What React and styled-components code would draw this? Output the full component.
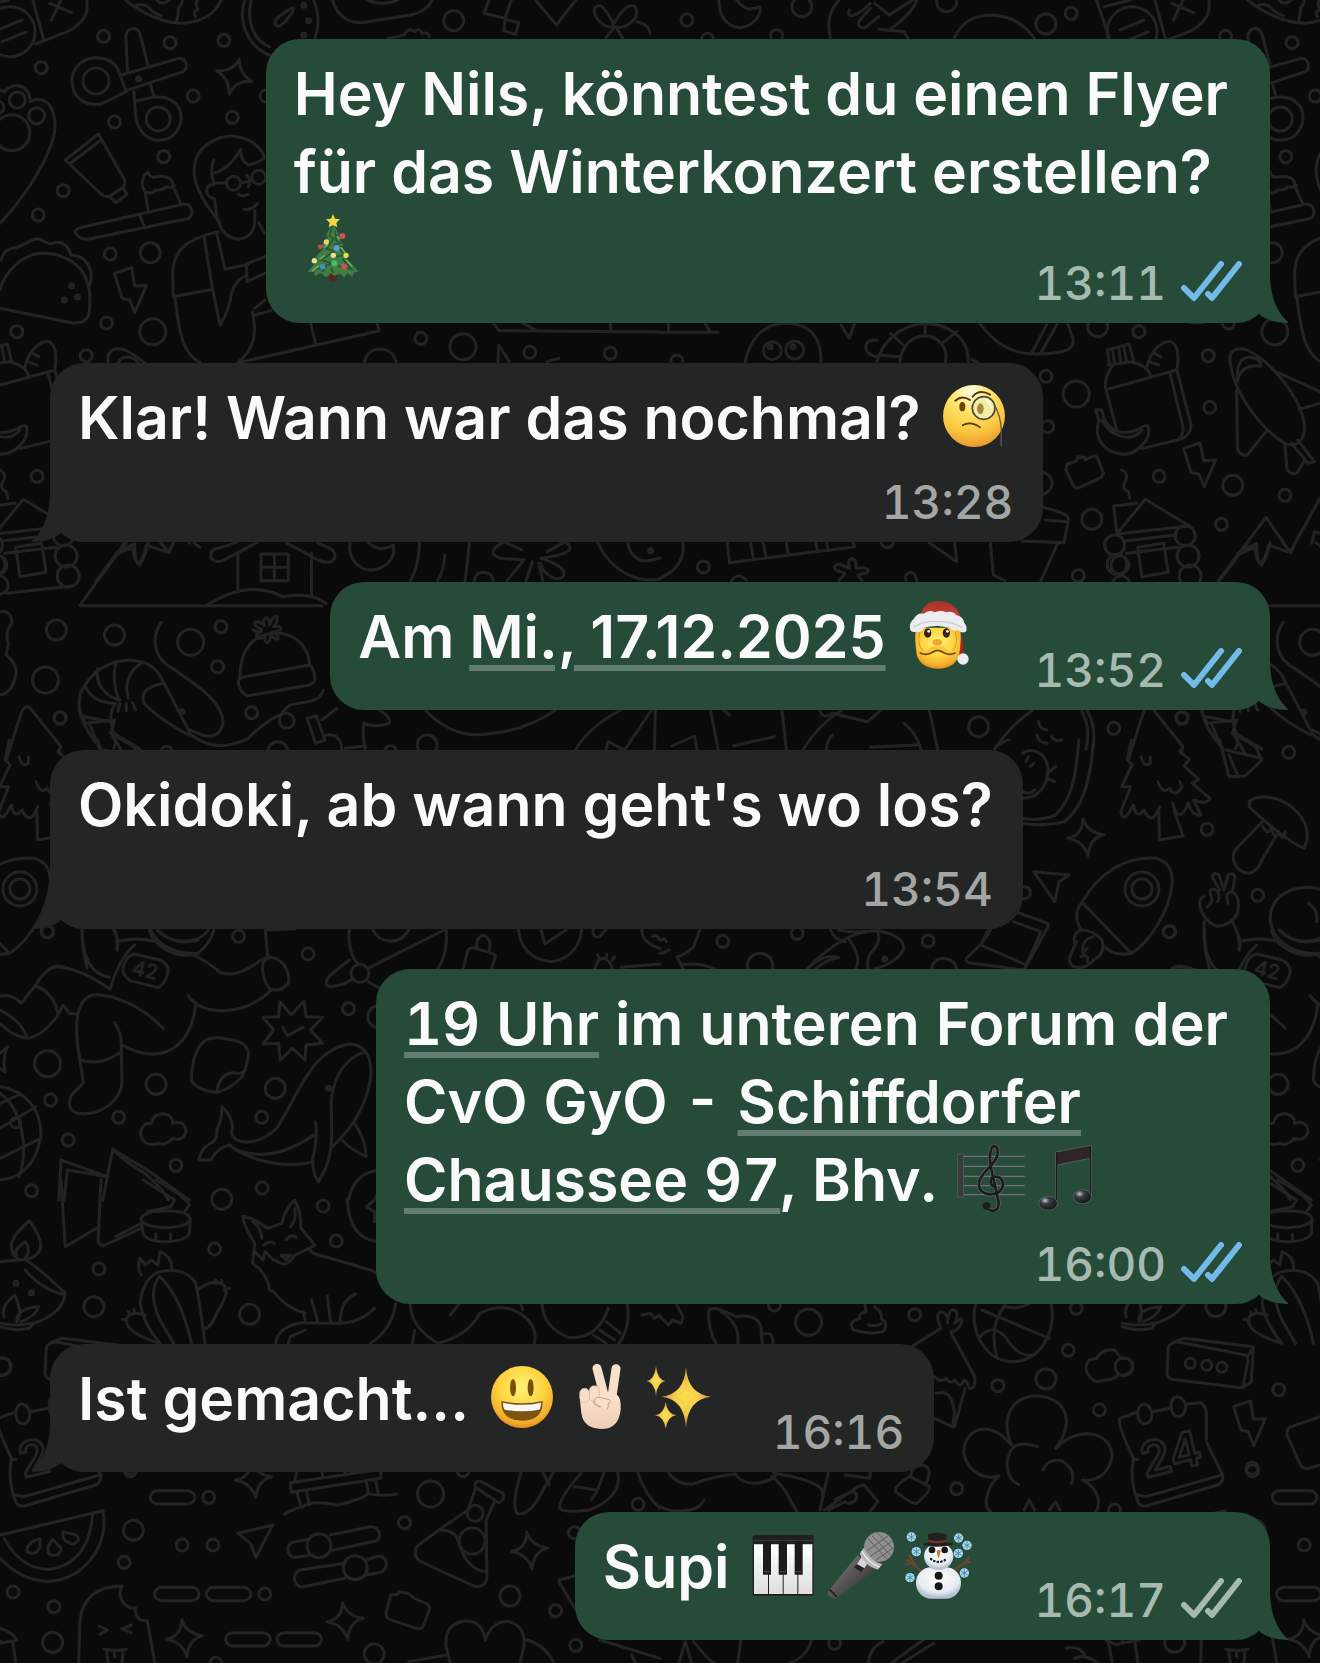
import React from 'react';
import styled, { createGlobalStyle, css } from 'styled-components';

const GlobalStyle = createGlobalStyle`
  * {
    box-sizing: border-box;
  }

  body {
    margin: 0;
    background: #0a0a0a;
    font-family: Inter, "Liberation Sans", sans-serif;
    -webkit-font-smoothing: antialiased;
  }
`;

const Screen = styled.main`
  position: relative;
  min-height: 100vh;
  padding: 39px 50px 23px;
  overflow: hidden;
`;

// sits behind the messages
const WallpaperSvg = styled.svg`
  position: absolute;
  top: 0;
  left: 0;
  width: 100%;
  height: 100%;
  fill: none;
  stroke: #232323;
  stroke-width: 3;
  stroke-linecap: round;
  stroke-linejoin: round;

  path, ellipse, rect {
    vector-effect: non-scaling-stroke;
  }
`;

const MessageList = styled.ol`
  position: relative;
  display: flex;
  flex-direction: column;
  gap: 40px;
  margin: 0;
  padding: 0;
  list-style: none;
`;

const layouts = {
  // time on its own row under the text
  below: css`
    flex-direction: column;
    gap: 20px;
  `,
  // time to the right of a single line
  beside: css`
    justify-content: space-between;
    gap: 56px;
  `,
  // time shares the last line, which has room to spare
  tucked: css`
    display: grid;
  `,
};

const Bubble = styled.li`
  position: relative;
  display: flex;
  align-self: ${(p) => (p.$mine ? 'flex-end' : 'flex-start')};
  max-width: 100%;
  padding: 15px ${(p) => (p.$mine ? 28 : 30)}px 15px 28px;
  border-radius: 34px;
  background: ${(p) => (p.$mine ? '#274b39' : '#242625')};
  color: ${(p) => (p.$mine ? '#a6bab0' : '#a4a5a5')};
  ${(p) => layouts[p.$layout]}
`;

const TailSvg = styled.svg`
  position: absolute;
  bottom: 0;
  ${(p) => (p.$mine ? 'right: -18px;' : 'left: -18px; transform: scaleX(-1);')}
  width: 40px;
  height: 50px;
  fill: ${(p) => (p.$mine ? '#274b39' : '#242625')};
`;

const Text = styled.p`
  grid-area: 1 / 1;
  margin: 0;
  padding-top: 1px;
  padding-bottom: ${(p) => (p.$layout === 'below' ? 0 : 19)}px;
  padding-right: ${(p) => (p.$wide ? 14 : 0)}px;
  color: #fafafa;
  font-size: 59px;
  font-weight: 600;
  line-height: 78px;
  font-variant-numeric: ${(p) => (p.$tabular ? 'tabular-nums' : 'normal')};
`;

const TextLink = styled.a`
  color: inherit;
  text-decoration: underline;
  text-decoration-color: rgba(255, 255, 255, 0.28);
  text-decoration-thickness: 6px;
  text-underline-offset: 7px;
`;

const Meta = styled.div`
  grid-area: 1 / 1;
  align-self: flex-end;
  justify-self: end;
  display: flex;
  align-items: center;
  gap: 14px;
`;

const Time = styled.time`
  font-size: 46px;
  font-weight: 500;
  line-height: 50px;
  font-variant-numeric: tabular-nums;
`;

const TicksSvg = styled.svg`
  width: 62px;
  height: 44px;
  fill: none;
  stroke: ${(p) => (p.$read ? '#72bbe8' : 'currentColor')};
  stroke-width: 6;
  stroke-linecap: round;
  stroke-linejoin: round;
`;

const EmojiSvg = styled.svg`
  width: 68px;
  height: 68px;
  margin: 0 5px;
  vertical-align: -11px;
`;

/* ---------- wallpaper ---------- */

const TILE = 1122;
const SX = 2.376;
const SY = 3;

// Each sheet covers one part of the tile; units are 1/SX by 1/SY of a pixel.
// rings: [cx, cy, r in px], dots: [cx, cy], pills: [x, y], sparkles: [cx, cy]
const sheets = [
  {
    x: 0, y: 0,
    paths: [
      'M-5 90L52 60M5 125L62 96M78 0L104 120M84 132L160 95Q215 60 206 0M145 0L122 60M118 10L170 38',
      'M298 0Q370 70 438 70Q505 60 526 0M325 15q20-5 30 10q10 15 28 22M372 0q10 15 25 5l8-8M420 60q5-20 3-35q12-15 10-30M465 50q-8-15 5-22q-8-20 0-28',
      'M582 0C565 60 585 140 645 168M597 0C585 60 600 120 640 140M745 0Q765 60 748 116M692 25C670 40 650 60 654 72C660 88 675 75 697 32Q700 20 692 25',
      'M300 275L240 312C200 320 170 290 171 240C172 200 200 172 230 173C265 175 280 200 285 225ZM288 225L425 175C445 175 448 205 435 215L300 272',
      'M303 215L299 105C305 80 325 80 332 100L352 198M358 255L366 290M318 275L322 340C325 400 355 422 378 421C415 420 432 380 430 345C428 310 400 285 365 292L325 302',
      'M568 177Q568 220 598 244Q560 240 545 282Q545 235 515 212Q555 215 568 177Z',
      'M0 670C60 590 140 440 130 360C125 300 95 290 72 305C70 250 30 245 10 275L0 270',
      'M234 402L155 480L240 582Q248 592 262 588L292 562Q300 550 295 538ZM165 492L240 420M290 562L302 582L276 608L258 588',
      'M195 682L435 613C455 610 462 635 450 655L212 717C190 722 175 700 180 690Q185 684 195 682M332 645L342 678',
      'M352 632L345 575C335 560 335 530 352 516Q355 535 372 530C400 525 412 540 410 556L430 612M345 575Q360 585 370 570Q385 572 395 560Q410 565 415 556',
      'M522 668C480 600 450 540 465 480C480 420 540 400 570 412C600 420 620 445 628 470M503 520Q540 515 572 448Q570 480 590 495Q610 490 628 475',
      'M508 555C485 550 485 590 510 597L515 650C525 700 545 715 565 718C595 715 610 690 605 632M508 480Q498 510 508 550L536 548M566 582Q575 592 588 584M580 628Q600 630 612 610M572 548L590 545M585 525Q600 540 590 560',
      'M518 695C440 720 412 750 410 820L412 890L505 868L485 712M515 700L535 808L590 793M415 890C425 980 430 1060 475 1087M505 868L523 975Q545 930 550 880Q560 840 580 830M630 770L585 792L587 845L630 820M600 935Q608 980 602 1020Q590 1065 565 1087M605 925L630 900M605 945L645 932M615 668L628 700',
      'M570 1087L902 992L895 968M738 970L750 1030',
      'M0 925L170 968C215 975 215 940 213 880C205 790 150 758 95 760C50 765 10 820 0 870M2 780Q10 745 40 742Q55 735 75 722Q90 710 105 725Q120 735 130 728Q160 722 168 765C205 765 225 810 213 855',
      'M272 820L313 803L320 858L348 856L320 938L308 900L290 895Z',
      'M1172 968L1185 992L1568 996M1240 968L1275 992M1450 970L1452 990M1183 1087L1185 1035L1210 1085M1300 1085L1328 1075M866 1087C870 1060 885 1047 903 1047C925 1048 938 1065 941 1087',
      'M790 0C800 50 830 70 860 68L975 45Q1015 35 1027 0M872 0Q905 20 945 0M922 116L960 105Q970 80 985 95Q995 80 1003 100Q1018 95 1020 110',
      'M1162 0L1150 40L1200 55L1215 0M1200 60L1197 92L1225 103L1233 68L1200 58M1272 0L1322 75L1368 0',
      'M1460 80C1440 20 1420 0 1412 30C1412 60 1440 85 1455 80C1480 20 1505 0 1513 30C1515 65 1480 90 1460 80M1458 85L1440 112M1465 85L1480 115M1513 65Q1540 70 1545 100',
    ],
    rings: [
      [24, 95, 25], [228, 243, 13], [376, 357, 12], [41, 300, 8], [87, 347, 8], [28, 398, 18], [-5, 322, 6], [555, 550, 7], [615, 532, 7],
      [246, 109, 6], [404, 128, 6], [532, 121, 6], [98, 203, 6], [459, 288, 6], [632, 288, 6], [552, 352, 6], [272, 366, 6], [389, 470, 6],
      [150, 572, 6], [91, 645, 6], [262, 762, 6], [253, 969, 6], [40, 995, 6], [205, 1067, 6], [1000, 1015, 6], [1259, 1057, 6],
      [1450, 1060, 6], [357, 758, 10], [1078, 62, 10], [363, 995, 13], [1100, 1040, 13],
    ],
    dots: [[722, 16], [733, 62], [722, 105], [329, 237], [170, 858], [153, 900], [184, 891]],
  },
  {
    x: 660, y: 0,
    paths: [
      'M140 0C140 50 160 82 190 83C220 80 240 50 238 20Q205 40 182 0',
      'M405 116C395 60 405 30 425 0M450 30C440 60 470 50 500 10M520 50L485 85Q465 80 475 60L500 25M510 10L545 45L600 0M520 88L580 95L590 116M610 0Q600 40 545 90',
      'M700 112C720 60 750 45 790 46C840 48 870 80 890 116M1037 0L1068 115M1055 20L1118 0',
      'M20 970L20 992M108 970L118 996M0 997L138 997M430 975L450 1015L462 970M202 1087C215 1010 250 970 300 970C360 970 385 1020 382 1087',
      'M515 1020C480 1015 480 1065 515 1070M515 1087C530 1020 570 980 625 970C690 970 735 1020 732 1087M570 1087C575 1020 610 1005 640 1008C670 1020 685 1050 678 1087M548 1000L578 1035M630 970L630 1008M670 1030L705 995M520 1065L568 1070M740 1078L755 1087',
      'M760 970C800 1040 850 1065 900 1062C960 1060 990 1050 980 1010L968 970M885 1055L920 970M905 1058L945 970',
    ],
    rings: [[64, 60, 6], [277, 107, 6], [977, 40, 6], [113, 118, 6], [337, 20, 10], [681, 5, 10], [917, 72, 10], [40, 1083, 6], [267, 1052, 9], [320, 1050, 9], [1040, 980, 10]],
    dots: [[262, 1040], [316, 1040]],
  },
  {
    x: 0, y: 340,
    paths: [
      'M15 760L170 738M190 797L230 725M190 797L765 797',
      'M505 660C495 640 505 625 520 625L560 608M505 660Q520 670 535 658L610 608M565 640L565 745M740 640L740 765M680 608L755 660Q785 675 795 655Q800 630 775 620L755 608M620 642H685V722H620ZM652 642V722M620 682H685M490 797Q560 740 620 750Q650 755 670 770Q740 755 775 790',
      'M275 640L320 610Q320 670 332 675Q345 650 352 608M382 608L402 638L412 607M460 608L475 622M230 725L300 607',
      'M832 607C825 650 850 690 882 690C920 688 940 650 935 615Q900 640 875 607M997 607Q995 680 975 722M1115 607Q1110 680 1105 722M1057 645Q1055 690 1040 722M1127 722Q1130 697 1150 697Q1170 700 1172 722',
      'M1195 607Q1150 640 1190 655L1245 660L1205 722M1345 607Q1380 640 1285 655Q1350 680 1338 710Q1320 730 1290 690L1285 670M1265 665L1250 722M1280 670L1290 722M1200 607L1240 630M1340 607L1300 635',
      'M1420 607C1450 690 1510 730 1568 718M1492 607C1495 650 1520 665 1540 662L1568 655',
      'M0 815Q30 812 28 850Q10 880 20 910L15 945Q40 970 38 1000Q30 1060 0 1065',
      'M15 1260Q30 1200 50 1120Q62 1085 75 1110L145 1220L140 1240',
      'M240 1225C190 1160 175 1080 200 1040C230 970 290 955 325 963C360 968 380 1000 390 1030L452 1180M390 1030C345 1040 335 1060 342 1090Q380 1140 448 1185M205 1045C220 1080 250 1090 275 1090M232 985C225 1030 250 1070 285 1080M275 970Q265 1020 282 1080M335 970Q290 1010 305 1075M275 1090Q255 1120 270 1180L330 1225M192 1128L262 1145M268 1190Q280 1205 270 1225M285 1090L280 1115M300 1090L300 1112M315 1088L322 1110',
      'M383 847C355 900 370 960 410 985C460 1030 530 1080 530 1150Q520 1200 480 1185L452 1170M455 1185C500 1230 550 1220 590 1195Q640 1130 680 1118C710 1130 700 1165 680 1165C655 1160 660 1120 690 1095C720 1085 760 1090 768 1050',
      'M570 1010C570 930 600 880 660 878C710 885 735 930 735 975M575 1012L735 975Q748 985 748 1020Q745 1030 735 1035L590 1067Q575 1065 567 1035Q565 1015 575 1012',
      'M622 868Q602 858 606 846Q618 842 628 856Q622 838 634 832Q642 840 640 856Q648 828 658 828Q662 842 650 860Q664 856 668 866Q662 878 648 876Q664 888 660 898Q648 896 642 882Q644 904 634 908Q626 898 630 884Q620 900 610 894Q606 880 622 874Q606 876 602 870',
      'M1010 1110C1070 1190 1130 1190 1170 1180Q1250 1170 1320 1110M900 1110Q930 1130 925 1150Q890 1165 865 1150Q860 1180 868 1228M730 1135L752 1128L772 1200L750 1210ZM765 1140L800 1105M775 1185Q810 1180 812 1228M820 1225L868 1218M1368 1228Q1400 1160 1475 1110M1485 1228L1548 1110M1557 1110L1555 1228M1440 1228L1445 1205L1480 1228',
    ],
    rings: [[134, 870, 10], [272, 885, 10], [453, 907, 13], [108, 1020, 13], [525, 860, 6], [517, 980, 6], [598, 1118, 6], [143, 1133, 6], [1015, 1215, 10], [660, 1235, 10], [928, 1235, 6], [157, 648, 11], [162, 708, 11], [-2, 735, 9], [-5, 675, 9]],
    dots: [[432, 1115], [1546, 632]],
  },
  {
    x: 660, y: 340,
    paths: [
      'M1068 75L1063 30L1115 12L1125 62M1080 72L1075 25M1095 68L1090 22M1108 62L1102 18M1065 75L1122 65M1075 78C1060 100 1058 120 1058 140L1085 270M1122 66Q1155 75 1165 103M1062 148L1228 90L1262 255Q1260 290 1235 298L1145 326M1212 100L1243 262Q1245 285 1228 302M1157 82C1165 30 1195 0 1215 5C1235 20 1232 60 1228 90M1172 38L1190 50M1162 65L1185 75',
      'M1035 210L1050 210C1055 260 1090 300 1145 262Q1150 255 1160 258C1170 300 1130 345 1098 343C1050 335 1030 290 1043 240ZM1050 240C1070 290 1120 310 1145 270',
      'M968 372L990 363L992 350L1010 352L1010 360L1030 348Q1040 348 1042 362L1054 400L1048 412L992 445Q985 445 980 432L964 390Z',
      'M1244 325L1283 309L1292 362L1320 360L1293 440L1280 402L1262 398Z',
      'M1357 80C1345 30 1370 20 1395 30C1460 70 1540 200 1530 280C1525 310 1505 320 1485 310C1430 270 1365 160 1357 80M1372 125Q1380 70 1428 78Q1425 50 1395 52Q1368 60 1372 125M1370 150L1372 325Q1380 350 1395 345L1440 275M1455 90L1568 155M1518 208L1568 190M1485 315L1490 390Q1505 410 1515 395L1530 365M1500 310L1540 370L1555 365L1515 300',
      'M1097 390Q1115 400 1105 425Q1095 445 1113 455L1116 475M1078 498L1133 490M1078 498L1085 575M1085 582L1153 478L1258 558ZM1103 603L1225 585M1108 640L1230 622M1135 622L1197 610L1207 697L1145 710Z',
      'M1326 722L1440 532L1497 637L1568 475M1380 640L1412 622Q1418 668 1427 672Q1440 650 1446 615L1490 635M1548 610L1555 575L1568 580',
      'M905 500Q975 520 970 540L960 608L860 603M915 540L965 545M785 608L792 705L820 722M945 610L905 722',
      'M160 608L165 668L463 620L458 605M215 608L222 655M245 608L252 652M300 608L305 645M370 608L375 635M395 605L400 632M640 608L705 665L700 608',
      'M455 655Q445 660 450 685L425 672Q408 678 418 690L440 700L425 722M455 655Q470 660 465 685L485 683Q500 688 492 698L470 705L480 722M585 722Q580 700 595 697Q608 700 610 722M170 722Q185 695 205 720M0 715Q60 680 55 610',
      'M120 1110L138 1228M290 1110L300 1228M380 1110Q385 1140 410 1120L493 1145L525 1110M340 1228Q380 1150 430 1112M395 1228Q400 1190 410 1185M580 1150Q610 1180 620 1228M640 1110L660 1228M175 1217L272 1190M28 1218L82 1188L88 1228M150 1110L165 1125M500 1222L610 1215',
      'M795 1228Q830 1160 885 1110M1000 1110Q1025 1160 1012 1228M1014 1110Q1038 1160 1028 1228M900 1145Q900 1165 918 1170M895 1185Q900 1210 920 1210M930 1190Q935 1205 955 1200',
      'M1285 1110L1300 1150L1370 1140M1310 1150L1335 1228M1370 1140L1360 1180L1430 1228M1365 1185L1390 1240',
    ],
    rings: [[917, 109, 6], [921, 260, 6], [1306, 202, 6], [1186, 409, 6], [1485, 466, 6], [1334, 553, 6], [994, 707, 6], [103, 681, 6], [540, 605, 6], [989, 162, 13], [1361, 436, 10], [1026, 538, 10], [905, 430, 11], [1080, 615, 10], [1248, 587, 10], [1086, 673, 10], [757, 1160, 10], [1078, 1165, 6], [1240, 1135, 6], [1494, 1237, 6]],
    dots: [],
  },
  {
    x: 0, y: 740,
    paths: [
      'M195 567C195 640 210 700 260 712M270 567Q285 600 278 630M278 605Q320 590 365 603M320 642L380 660Q405 675 398 705Q390 735 375 743L310 722Q290 705 292 685Q300 645 320 642',
      'M355 570C365 620 420 660 470 640Q500 610 508 570M375 570Q400 605 440 604Q480 600 495 570',
      'M50 790L85 735Q110 680 140 680Q200 690 262 748Q280 660 320 615M0 768Q30 760 50 790M85 738Q130 760 138 825M0 810Q50 840 65 895Q100 890 138 825L150 795L165 820L182 822M0 850Q30 890 65 895',
      'M388 865C330 790 260 760 220 765C180 780 178 850 185 920L198 1028L170 1065Q155 1110 185 1120C240 1130 290 1080 290 1020L288 925Q290 880 272 847M192 960Q240 980 288 935M290 915C340 950 400 960 440 890Q460 850 465 795M447 767C480 830 580 830 645 750M460 645Q500 670 520 695Q560 720 620 660L640 650M625 668Q640 640 665 662Q690 690 685 730Q665 760 640 745Q620 710 625 668M630 570L636 650M630 570L700 567',
      'M830 567C825 620 840 660 850 670M885 567C900 610 950 620 972 567M1060 567Q1065 640 1040 686M875 685L1055 570M830 660L785 705Q765 735 785 740Q820 735 840 715M875 725Q895 740 905 745',
      'M1100 686L1112 630Q1118 620 1130 625L1170 640Q1180 645 1176 655L1168 686M1133 622Q1130 590 1150 586Q1168 595 1163 630M1232 567C1235 620 1260 660 1310 665C1360 655 1380 610 1382 567M1285 567L1295 612L1345 570M1410 567Q1405 595 1425 590L1440 567',
      'M1413 686Q1420 655 1435 655Q1450 660 1455 686M1425 655L1420 645M1440 655L1442 643M1455 660L1460 650M1475 682L1568 672M1525 567Q1525 610 1568 625M1550 590Q1560 580 1568 600',
      'M665 785L692 825L722 783L727 830L766 832L738 870L766 910L727 915L725 960L695 925L666 960L662 910L625 912L650 870L625 832L662 830ZM672 862L683 887L720 862',
      'M480 910Q500 885 540 898Q595 905 590 950Q585 985 575 1010Q550 1045 515 1058Q450 1045 455 1010Q458 940 480 910M515 1058Q520 1000 555 998Q575 1005 583 990',
      'M550 1180C560 1220 620 1215 660 1160C710 1060 740 930 830 912C880 915 890 980 875 1050C860 1110 840 1160 790 1220M545 1215C600 1270 690 1285 745 1265M750 1145Q755 1200 742 1260Q745 1310 757 1325Q790 1260 788 1180L787 1080Q800 960 870 935M550 1180Q560 1140 527 1100Q528 1140 515 1170Q518 1200 500 1210Q480 1220 472 1260L500 1260Q520 1220 545 1215M840 1145Q870 1200 870 1250Q835 1230 812 1200M560 1230Q650 1270 745 1185',
      'M375 1210Q350 1220 340 1200Q325 1180 345 1152L360 1150Q365 1118 392 1122Q412 1130 410 1150Q440 1140 442 1175Q435 1205 410 1195Q390 1220 375 1210',
      'M0 1040C60 1050 100 1110 97 1190Q80 1310 0 1320M0 1060Q45 1100 55 1200Q60 1260 45 1310M0 1165L85 1100M0 1255L97 1195M0 1090L45 1065M0 940L18 920Q5 950 12 995L0 985',
      'M140 1380L145 1260L255 1310L268 1228L330 1275L350 1290L450 1380M152 1380L160 1290L255 1310L245 1380M268 1228Q300 1270 345 1300L385 1350L400 1380M828 1380Q840 1300 900 1290',
    ],
    rings: [[112, 575, 6], [567, 589, 6], [732, 642, 6], [828, 806, 6], [120, 1080, 6], [282, 1132, 6], [622, 1132, 6], [162, 1200, 6], [418, 1276, 6], [75, 1352, 6], [623, 1344, 6], [113, 971, 13], [371, 1033, 10], [654, 1045, 10], [855, 700, 9], [900, 830, 11], [37, 1148, 5]],
    dots: [[781, 1045]],
  },
  {
    x: 660, y: 740,
    paths: [
      'M1120 0L1110 60Q1125 75 1120 78L1097 140L1118 140L1095 215Q1100 250 1118 210L1125 195Q1130 240 1150 210Q1165 250 1180 220L1188 200M1230 0L1242 20L1235 35L1258 58L1245 78L1280 118L1265 130L1307 175Q1300 195 1268 180L1285 225Q1265 230 1255 190Q1240 240 1225 215L1218 190M1185 215L1187 300L1243 288L1222 215M1143 50Q1150 85 1165 70L1165 50M1183 125Q1195 165 1210 145Q1225 175 1240 140L1235 125',
      'M1330 0L1352 110L1390 108L1430 60L1415 20L1390 0M1352 45L1372 105M1345 30L1430 55',
      'M1400 185C1420 160 1470 170 1500 200C1540 240 1545 290 1530 325C1500 310 1440 250 1400 200ZM1435 240L1370 325C1350 350 1370 400 1400 400Q1420 395 1430 360L1465 285M1432 260Q1445 290 1452 262Q1460 305 1470 275Q1480 310 1485 275',
      'M1330 450L1312 410Q1318 392 1328 405L1340 450L1350 405Q1362 395 1366 410L1360 455Q1380 470 1372 520Q1355 560 1320 558Q1290 540 1283 500Q1280 475 1292 470M1300 500Q1315 490 1310 470Q1300 445 1318 448Q1335 460 1325 485M1350 490Q1340 455 1360 455M1293 545Q1290 620 1305 685M1360 545Q1380 590 1376 630',
      'M1568 447C1500 430 1448 470 1450 540C1455 600 1500 645 1568 640M1540 490Q1565 510 1560 545M1470 570Q1510 620 1568 600',
      'M862 40C885 20 920 40 922 90C920 150 890 175 862 175M870 65L875 50M880 80l8-10M862 155Q880 165 890 150M920 100L940 80M918 115L938 125M800 20Q820 0 830 0M995 0C990 80 985 170 940 225Q900 245 862 235M1030 0C1025 100 1010 200 960 245Q920 260 858 250',
      'M888 395L972 405L948 425L938 485Z',
      'M1003 487C1040 400 1110 345 1180 355Q1220 370 1217 430C1210 520 1160 610 1120 640ZM1003 487C985 510 988 540 1000 570M1055 620Q1080 650 1120 640M1000 570Q980 580 985 610L990 605Q975 640 972 660Q980 685 985 680Q1010 690 1030 660Q1060 640 1050 600Q1030 570 1000 570M1030 590Q1000 600 1005 640L1015 625M1000 650Q1020 640 1015 665',
      'M208 686C205 650 225 640 240 640Q270 645 268 686M645 686Q650 655 675 655Q700 660 705 686M1215 686Q1235 670 1260 685',
      'M785 570Q775 600 728 655Q725 668 740 670L865 690L922 560Q925 550 910 545L845 515M780 570L762 615L870 675L905 575L840 545',
      'M350 686C400 620 460 570 520 572Q585 590 578 630Q560 670 510 686M405 570Q415 600 440 605M450 600Q480 650 465 686M515 573Q530 600 500 640Q490 660 495 686M355 680Q390 640 425 652Q395 660 370 686M425 570Q460 580 490 573',
      'M0 640Q10 640 22 630M5 600Q10 590 15 605M95 568L80 620Q60 645 40 650L55 686M50 675Q90 665 130 686',
    ],
    rings: [[1145, 447, 17], [1145, 447, 10], [1300, 268, 6], [1420, 466, 6], [1211, 575, 6], [866, 458, 6], [637, 603, 6], [326, 580, 6], [149, 604, 6]],
    dots: [[534, 657]],
    sparkles: [[1011, 292]],
  },
  {
    x: 0, y: 1180,
    paths: [
      'M145 0L155 200L235 140M240 0L233 185Q240 200 250 195L335 145M275 170L335 130M340 0L415 60L405 80L350 95M370 0Q440 50 450 75L440 92M335 115L340 160Q350 185 390 185Q440 185 450 160L452 115M370 162V180M405 162V180M335 118Q340 92 393 92Q448 92 452 118Q445 142 393 143Q342 142 335 118',
      'M825 60Q830 180 902 185M900 35L890 60L870 80L890 95L890 125',
      'M0 245Q40 240 50 240M60 240Q90 260 155 340Q150 400 80 430L70 445Q30 455 0 440M60 270Q100 330 155 345M30 215Q15 180 70 123Q110 190 90 220Q75 240 50 240Q30 230 30 215M40 225Q30 210 60 185Q75 215 60 232M0 430Q40 440 75 430M10 410Q0 380 35 345Q55 400 40 425M40 420Q40 385 92 380Q85 410 50 425',
      'M380 490Q340 430 333 370Q340 290 380 275Q440 260 465 310Q475 370 487 490M378 290Q350 340 380 420L412 490M380 290Q430 350 455 490M470 330Q510 290 535 320Q545 340 515 400Q500 445 487 445M380 490Q300 460 300 420Q305 390 345 405M335 285Q325 260 333 235L345 255L360 240L375 255L380 215Q410 230 408 270M513 300v10M527 300v10M545 325l-12 5M305 395l5 10M290 418l12 3M318 388l2 12',
      'M605 190C590 160 575 120 578 108Q605 115 635 145L670 130Q675 90 700 60Q715 90 715 145L748 195L735 205Q740 220 750 222L880 270L905 285M605 190L600 250L615 265Q640 300 640 330L650 335Q680 385 725 400M605 215L625 240L630 215L650 240M668 226H690L680 240ZM655 240Q680 270 700 225L735 205M628 195Q640 180 652 190M680 180Q690 160 703 172M600 125Q620 140 622 175M700 85Q705 120 690 140',
      'M740 358L755 425M778 348L785 425M845 342Q810 360 808 425M720 395L725 420M890 385Q850 435 790 430L715 428Q660 440 655 490M725 450L690 470L685 490M940 372Q930 450 880 490',
      'M975 372Q975 440 1040 490Q1110 470 1140 400Q1180 375 1215 388Q1280 420 1270 490M985 450L980 490M1070 405L1090 372M1238 372L1242 390M1288 372Q1290 440 1350 472Q1420 480 1445 385M1490 372Q1500 440 1470 490M1410 465L1440 490M1425 450L1460 480M1440 425L1475 460M1525 405L1545 400L1555 415L1568 405',
      'M690 908L905 868V895L692 937ZM705 877L700 905M765 877L767 890M820 877L818 885M705 935L715 980M728 932L735 975M870 903L875 940M892 900L898 937M675 1003Q700 985 720 980Q740 960 800 975Q860 960 875 940Q900 950 942 943',
      'M735 1078L700 1085Q680 1090 685 1115Q690 1135 705 1132L740 1125M785 1065L880 1040Q900 1040 902 1065Q900 1085 885 1085L785 1112M820 1150L712 1170Q698 1180 700 1200Q705 1222 720 1220L820 1195M868 1140L900 1128Q918 1130 918 1155Q915 1175 900 1178L870 1185',
      'M565 1060L648 1035L608 1132L595 1090Z',
      'M1130 922Q1125 905 1140 903L1195 940Q1200 960 1185 968ZM1130 925L1112 990Q1030 1060 990 1100Q980 1130 1000 1145L1125 1218Q1155 1225 1157 1190L1155 1020L1175 965M1045 1050Q1085 1050 1090 1090Q1110 1170 1155 1175',
      'M1238 877Q1215 970 1228 1000Q1260 1010 1290 930L1315 877M1290 877L1305 915M1380 880Q1325 960 1330 985Q1340 1000 1400 990Q1480 950 1468 877M1365 920L1420 930L1435 877M1420 930L1405 960M1515 877Q1535 950 1568 985',
      'M0 1065L245 992C260 1110 190 1205 110 1204Q50 1200 0 1135M10 1075Q50 1170 120 1168Q210 1150 220 1005M95 1075Q60 1090 65 1115Q85 1130 95 1100ZM125 1078Q105 1110 120 1125Q145 1130 145 1105ZM150 1055Q145 1085 175 1092Q195 1080 180 1065Z',
      'M187 1449L190 1320Q200 1220 290 1218Q275 1260 310 1285L322 1283Q320 1325 350 1322L368 1449M235 1338L255 1350L238 1362M312 1335L290 1347L312 1358M247 1408Q275 1415 300 1408M253 1412L257 1449M292 1412L290 1449M272 1415V1430M0 1345Q30 1355 40 1380L30 1385L38 1449M0 1390L28 1383',
      'M1153 1380Q1145 1320 1105 1323Q1055 1330 1060 1400L1070 1449M1153 1380Q1170 1320 1210 1325Q1250 1340 1245 1400L1235 1449M970 1445L1062 1425M1250 1380Q1290 1390 1315 1445',
      'M928 1245L945 1243L947 1235L970 1240L985 1255L1015 1272Q1022 1280 1020 1290L1005 1340Q1000 1347 990 1345L925 1318Q915 1310 918 1295Z',
      'M1328 1200L1365 1188M1328 1205L1368 1290M1425 1380L1568 1435M1500 1425L1510 1449',
    ],
    rings: [[768, 78, 6], [799, 183, 6], [510, 207, 6], [235, 267, 6], [295, 1147, 6], [31, 1236, 6], [128, 1280, 6], [433, 1095, 6], [506, 1095, 6], [496, 952, 6], [961, 1028, 6], [1320, 1292, 6], [1368, 1396, 6], [629, 1242, 6], [1516, 973, 6], [1365, 1058, 6], [310, 872, 6], [1100, 872, 6], [513, 1450, 6], [527, 58, 10], [593, 403, 10], [223, 380, 10], [317, 1051, 10], [125, 1387, 10], [1212, 1248, 10], [889, 1422, 10], [5, 560, 9], [1023, 942, 13], [758, 1097, 12], [844, 1163, 12], [1129, 1000, 8], [1122, 1083, 13]],
    dots: [[38, 310], [75, 338]],
    pills: [[357, 932], [367, 1222], [490, 1222], [536, 1358], [658, 1358]],
    sparkles: [[602, 898], [1258, 1112], [438, 1375], [820, 1323]],
  },
  {
    x: 660, y: 1180,
    paths: [
      'M1208 500Q1215 485 1235 487L1390 525Q1398 530 1397 545L1385 620Q1380 625 1370 622L1215 598Q1202 590 1205 570ZM1220 487L1245 475L1410 500L1397 528M1410 500L1405 605L1385 622',
      'M1135 696L1092 715Q1088 740 1125 835Q1115 900 1135 965Q1140 980 1155 978L1325 915Q1340 905 1337 885L1300 790M1170 695L1212 685M1250 672L1285 668Q1298 680 1298 700V780M1125 840L1135 838M1135 945L1155 950L1335 885',
      'M1135 702Q1135 675 1150 672Q1168 678 1169 702Q1168 730 1152 732Q1136 728 1135 702M1214 680Q1214 652 1229 650Q1248 655 1249 680Q1248 708 1231 710Q1215 706 1214 680',
      'M835 795C810 720 830 650 895 647C970 655 985 730 940 805C1000 730 1075 760 1074 830C1065 890 1030 905 1003 900C1050 930 1045 980 1035 995M835 795C780 710 720 750 722 820C730 880 775 900 805 888C770 930 770 980 785 995M865 990L877 960L890 990M925 990L940 965L950 990M897 800Q830 770 825 850Q825 900 852 913M910 870Q920 835 955 842Q990 870 978 910',
      'M600 498L668 445Q650 400 670 395Q685 400 683 430Q685 385 700 390Q712 400 700 430Q720 405 717 425Q710 455 690 455L748 590Q750 630 735 625Q728 600 722 600Q715 630 700 600Q690 615 680 595Q665 610 652 590M655 640Q670 635 680 640Q695 650 700 700L695 740L652 715M725 625L700 740',
      'M750 372C735 450 770 545 840 545C910 540 940 450 930 372M765 390L925 475M820 375Q780 440 800 530M820 380Q850 390 875 372M760 470Q790 430 820 470Q850 530 880 525',
      'M1060 600Q1035 608 1030 600Q1000 570 1020 540L1038 535Q1050 505 1080 510Q1095 530 1092 535Q1125 530 1122 565Q1115 590 1090 585Q1075 600 1060 600',
      'M460 450Q445 425 475 415Q470 400 490 395L487 375M510 380Q530 400 525 415Q545 430 530 455Q500 465 460 450M495 435Q520 440 527 430',
      'M115 395Q120 370 180 410Q230 400 240 440L243 490M115 395Q115 450 133 490M145 395Q190 430 185 490M240 465Q270 450 268 490M0 410L20 435L30 420L50 430L55 410L40 375',
      'M1363 680L1403 663L1410 718L1438 716L1411 797L1397 755L1380 750Z',
      'M1568 710L1500 740Q1488 745 1490 765L1520 850Q1525 868 1540 865L1568 855',
      'M20 877Q40 915 80 912Q120 890 180 882Q190 910 230 910Q280 900 275 877M265 890Q290 910 310 960L325 995M270 880Q370 900 385 930L388 950M400 877L380 990M0 980Q30 1000 70 990Q95 985 105 960',
      'M560 925Q575 900 595 890L640 920Q645 930 610 970Q600 975 560 935ZM595 887Q600 855 625 855Q650 865 632 910M390 990L470 920L485 915L518 965L500 993M415 960Q440 940 460 935Q475 950 460 965Q445 975 440 965L400 990M440 885L498 895L500 877',
      'M45 1449L60 1385L75 1449M80 1385Q120 1449 130 1449M185 1449L192 1380M360 1380Q350 1430 310 1449M495 1449Q500 1400 530 1385M550 1449L625 1380M575 1449L650 1390M965 1405Q1000 1395 1010 1430M985 1435Q1010 1420 1040 1449M1060 1380L1085 1395L1100 1385M1065 1385L1075 1449',
    ],
    rings: [[1260, 550, 5], [1299, 556, 5], [1335, 562, 5], [605, 404, 6], [970, 511, 6], [803, 617, 6], [1044, 690, 6], [1407, 865, 6], [1470, 629, 6], [705, 926, 6], [989, 385, 6], [272, 375, 6], [415, 1390, 6], [1080, 990, 6], [917, 597, 10], [353, 427, 13]],
    dots: [],
  },
];

const SPARKLE = 'M-6-55Q4-15 43-8Q10 2 6 55Q-4 12-43 2Q-8-4-6-55Z';

function Sheet({ x, y, paths, rings, dots, pills = [], sparkles = [] }) {
  return (
    <g transform={`translate(${x} ${y}) scale(${1 / SX} ${1 / SY})`}>
      {paths.map((d) => <path key={d} d={d} />)}
      {rings.map(([cx, cy, r], i) => <ellipse key={i} cx={cx} cy={cy} rx={r * SX} ry={r * SY} />)}
      {dots.map(([cx, cy], i) => <ellipse key={i} cx={cx} cy={cy} rx={SX * 2} ry={SY * 2} fill="#232323" />)}
      {pills.map(([px, py], i) => <rect key={i} x={px} y={py} width="106" height="40" rx="18" ry="20" />)}
      {sparkles.map(([cx, cy], i) => <path key={i} d={SPARKLE} transform={`translate(${cx} ${cy})`} />)}
    </g>
  );
}

function Wallpaper() {
  return (
    <WallpaperSvg aria-hidden="true">
      <defs>
        <g id="doodles">
          {sheets.map((sheet) => <Sheet key={`${sheet.x}-${sheet.y}`} {...sheet} />)}
          <text x="145" y="977" fontSize="20" textAnchor="middle" strokeWidth="1" fill="#232323" transform="rotate(14 145 971)">42</text>
          <text x="1171" y="1471" fontSize="48" fontWeight="600" textAnchor="middle" transform="rotate(-14 1171 1455)">24</text>
        </g>
      </defs>
      {[-1, 0, 1, 2].map((n) => <use key={n} href="#doodles" x={n * TILE} />)}
    </WallpaperSvg>
  );
}

/* ---------- emoji ---------- */

const HiddenSvg = styled.svg`
  position: absolute;
  width: 0;
  height: 0;
`;

function Defs() {
  return (
    <HiddenSvg aria-hidden="true">
      <defs>
        <radialGradient id="face" cx="0.5" cy="0.35" r="0.66">
          <stop offset="0" stopColor="#fff27a" />
          <stop offset="0.55" stopColor="#fdd33f" />
          <stop offset="0.85" stopColor="#f5ae2c" />
          <stop offset="1" stopColor="#e08a1c" />
        </radialGradient>
        <radialGradient id="monoface" cx="0.45" cy="0.1" r="0.95">
          <stop offset="0" stopColor="#fffce0" />
          <stop offset="0.35" stopColor="#fde468" />
          <stop offset="0.7" stopColor="#fbc53f" />
          <stop offset="1" stopColor="#e8902a" />
        </radialGradient>
        <linearGradient id="skin" x1="0" y1="0" x2="0" y2="1">
          <stop offset="0" stopColor="#fae3cf" />
          <stop offset="1" stopColor="#efcdb4" />
        </linearGradient>
        <radialGradient id="gold">
          <stop offset="0" stopColor="#ffe45c" />
          <stop offset="0.5" stopColor="#f6cb48" />
          <stop offset="1" stopColor="#c88a45" />
        </radialGradient>
        <linearGradient id="metal" x1="0" y1="0" x2="1" y2="1">
          <stop offset="0" stopColor="#8b8b8b" />
          <stop offset="0.5" stopColor="#555353" />
          <stop offset="1" stopColor="#242222" />
        </linearGradient>
        <linearGradient id="ivory" x1="0" y1="0" x2="0" y2="1">
          <stop offset="0" stopColor="#ffffff" />
          <stop offset="1" stopColor="#dedede" />
        </linearGradient>
        <radialGradient id="snow" cx="0.5" cy="0.35" r="0.6">
          <stop offset="0" stopColor="#ffffff" />
          <stop offset="0.75" stopColor="#e6ecf2" />
          <stop offset="1" stopColor="#b3c2cf" />
        </radialGradient>
        <radialGradient id="notehead" cx="0.35" cy="0.3" r="0.7">
          <stop offset="0" stopColor="#c5c8cf" />
          <stop offset="0.35" stopColor="#3a3a42" />
          <stop offset="1" stopColor="#17151a" />
        </radialGradient>
        <linearGradient id="santahat" x1="0" y1="0" x2="0" y2="1">
          <stop offset="0" stopColor="#a8322a" />
          <stop offset="1" stopColor="#d0483c" />
        </linearGradient>
      </defs>
    </HiddenSvg>
  );
}

const Emoji = ({ label, children }) => (
  <EmojiSvg viewBox="0 0 204 204" role="img" aria-label={label}>{children}</EmojiSvg>
);

const TreeEmoji = () => (
  <Emoji label="Weihnachtsbaum">
    <path d="M88 170H116L114 200Q102 206 90 200Z" fill="#4a2c1c" />
    <path d="M101 26L120 62L110 62L134 94L122 96L150 128L138 130L178 172L164 176L160 190L146 176L136 190L122 178L108 186L96 178L80 190L66 176L48 186L46 174L26 174L58 134L48 132L74 102L64 100L88 68L80 66Z" fill="#3f7f46" />
    <path d="M100 34L92 66L104 74L82 104L106 112L66 138L100 148L46 168M108 50L112 80L124 88L104 92M120 104L138 122L112 128M130 134L158 166L118 156M96 162L104 176M80 156L70 174" fill="none" stroke="#285a35" strokeWidth="6" />
    <path d="M88 92L76 100M78 124L62 136M60 156L40 170M114 66L122 76M126 100L138 116M142 138L160 158" stroke="#6fae60" strokeWidth="5" />
    <path d="M102 0L108 14L123 16L112 26L115 40L102 33L89 40L92 26L81 16L96 14Z" fill="#f6d743" />
    <circle cx="130" cy="66" r="9" fill="#d44e51" />
    <circle cx="82" cy="84" r="8" fill="#ead66a" />
    <circle cx="64" cy="98" r="7" fill="#c9484c" />
    <circle cx="113" cy="103" r="9" fill="#5d9bd8" />
    <circle cx="103" cy="124" r="8" fill="#f3dd8a" />
    <circle cx="141" cy="124" r="8" fill="#f2dd4b" />
    <circle cx="46" cy="140" r="8" fill="#f1dd9a" />
    <circle cx="71" cy="158" r="8" fill="#4d8bd0" />
    <circle cx="106" cy="148" r="9" fill="#4fb870" />
    <circle cx="136" cy="158" r="9" fill="#d44e51" />
  </Emoji>
);

const MonocleEmoji = () => (
  <Emoji label="Gesicht mit Monokel">
    <circle cx="102" cy="102" r="93" fill="url(#monoface)" />
    <ellipse cx="67" cy="74" rx="9" ry="14" fill="#6b430f" />
    <path d="M46 56Q66 38 90 54M98 44Q118 20 150 38" fill="none" stroke="#56360e" strokeWidth="6" strokeLinecap="round" />
    <circle cx="131" cy="78" r="34" fill="#f1eda6" stroke="#4c4636" strokeWidth="5" />
    <ellipse cx="121" cy="80" rx="10" ry="16" fill="#a48a3f" />
    <path d="M134 48Q156 56 156 82Q144 70 134 48Z" fill="#ffffff" opacity="0.7" />
    <path d="M68 130Q92 116 120 136" fill="none" stroke="#56360e" strokeWidth="5" strokeLinecap="round" />
    <path d="M162 66L170 82Q188 124 183 170L184 192" fill="none" stroke="#5d594e" strokeWidth="4" />
  </Emoji>
);

const SantaEmoji = () => (
  <Emoji label="Mann mit Nikolausmütze">
    <path d="M150 80Q180 100 176 168L164 170Q160 120 150 100Z" fill="#a5261f" />
    <path d="M32 80Q28 120 36 164Q50 202 99 203Q148 202 162 164Q170 120 166 80Z" fill="url(#face)" />
    <path d="M44 92Q36 136 54 148M152 92Q160 136 142 148" fill="none" stroke="#d9961f" strokeWidth="3" />
    <path d="M46 156Q60 154 76 140Q90 130 98 138Q106 130 120 140Q136 154 150 156Q138 166 118 160L98 150L78 160Q58 166 46 156Z" fill="#fbc63a" />
    <path d="M46 156Q62 164 78 156Q90 148 98 148Q106 148 118 156Q134 164 150 156" fill="none" stroke="#6e4a12" strokeWidth="5" strokeLinecap="round" strokeLinejoin="round" />
    <ellipse cx="68" cy="96" rx="11" ry="14" fill="#332414" />
    <ellipse cx="124" cy="96" rx="11" ry="14" fill="#332414" />
    <circle cx="71" cy="91" r="4" fill="#ffffff" />
    <circle cx="127" cy="91" r="4" fill="#ffffff" />
    <ellipse cx="97" cy="124" rx="14" ry="10" fill="#eda92c" />
    <path d="M46 44Q56 2 98 0Q150 0 166 46L170 70H40Z" fill="url(#santahat)" />
    <path d="M16 88Q10 66 26 54Q36 34 56 38Q72 24 90 34Q108 26 124 34Q142 28 154 42Q176 48 178 66Q190 80 182 92Q172 98 158 88Q144 92 134 80Q110 76 98 74Q72 76 58 80Q46 98 32 92Q22 96 16 88Z" fill="#ededf0" />
    <path d="M26 78Q60 58 98 62Q140 60 172 80" fill="none" stroke="#c9c9d0" strokeWidth="4" />
    <circle cx="174" cy="174" r="17" fill="#ededf0" />
  </Emoji>
);

const StaffEmoji = () => (
  <Emoji label="Notenschlüssel">
    <path d="M20 37H203M20 67H203M20 97H203M20 125H203M20 152H203" stroke="#6d7570" strokeWidth="4" />
    <rect x="2" y="30" width="18" height="130" fill="#3b3b3b" stroke="#5a5f5c" strokeWidth="2" />
    <path d="M112 128C96 122 98 98 115 98C138 98 146 125 128 142C104 160 62 150 66 116C70 84 122 60 122 26C122 6 112 0 104 12C94 34 100 60 106 90L122 160C130 190 120 202 104 200C94 198 86 194 86 186" fill="none" stroke="#646864" strokeWidth="12" strokeLinecap="round" />
    <path d="M112 128C96 122 98 98 115 98C138 98 146 125 128 142C104 160 62 150 66 116C70 84 122 60 122 26C122 6 112 0 104 12C94 34 100 60 106 90L122 160C130 190 120 202 104 200C94 198 86 194 86 186" fill="none" stroke="#1d1c1d" strokeWidth="8" strokeLinecap="round" />
    <circle cx="88" cy="186" r="11" fill="#1d1c1d" />
  </Emoji>
);

const NotesEmoji = () => (
  <Emoji label="Musiknoten">
    <path d="M65 25V176M166 6V156" stroke="#66716c" strokeWidth="8" />
    <path d="M63 24L168 4V42L63 64Z" fill="#2e2526" stroke="#66716c" strokeWidth="2" />
    <path d="M65 25V176M166 6V156" stroke="#1c191b" strokeWidth="5" />
    <ellipse cx="39" cy="178" rx="28" ry="21" fill="url(#notehead)" stroke="#66716c" strokeWidth="2" />
    <ellipse cx="142" cy="158" rx="27" ry="21" fill="url(#notehead)" stroke="#66716c" strokeWidth="2" />
  </Emoji>
);

const GrinEmoji = () => (
  <Emoji label="Grinsendes Gesicht">
    <circle cx="102" cy="102" r="93" fill="url(#face)" />
    <ellipse cx="75" cy="74" rx="9" ry="26" fill="#7a4f0c" />
    <ellipse cx="128" cy="74" rx="9" ry="26" fill="#7a4f0c" />
    <path d="M40 114Q102 128 164 114Q166 172 102 173Q38 172 40 114Z" fill="#7d5510" />
    <path d="M45 119Q102 132 159 119Q160 132 154 140Q102 150 50 140Q44 132 45 119Z" fill="#f7f7f7" />
  </Emoji>
);

const VictoryEmoji = () => (
  <Emoji label="Victory-Geste">
    <path d="M93 16L114 96M150 17L138 100" stroke="#f8dfca" strokeWidth="27" strokeLinecap="round" />
    <path d="M42 112Q40 94 58 94H150Q166 100 164 140Q158 198 106 198Q52 196 46 150Z" fill="url(#skin)" />
    <rect x="41" y="76" width="30" height="42" rx="15" fill="#f8dfca" stroke="#dbb296" strokeWidth="2" />
    <rect x="70" y="68" width="30" height="48" rx="15" fill="#f8dfca" stroke="#dbb296" strokeWidth="2" />
    <path d="M84 110Q92 100 106 104L130 110Q140 116 126 122Q130 132 122 140" fill="#f8dfca" stroke="#cd9d7e" strokeWidth="3" />
    <path d="M84 112Q80 124 104 132" fill="none" stroke="#cd9d7e" strokeWidth="4" />
  </Emoji>
);

const SparklesEmoji = () => (
  <Emoji label="Funken">
    <path d="M126 12Q131 94 202 101Q131 108 126 194Q121 108 52 101Q121 94 126 12Z" fill="url(#gold)" />
    <path d="M36 10Q40 50 64 54Q40 58 36 98Q32 58 8 54Q32 50 36 10Z" fill="url(#gold)" />
    <path d="M65 116Q69 153 97 157Q69 161 65 198Q61 161 33 157Q61 153 65 116Z" fill="url(#gold)" />
    <path d="M126 56Q130 96 164 101Q130 106 126 148Q122 106 88 101Q122 96 126 56Z" fill="#fbd94f" stroke="#f3c94b" strokeWidth="3" />
  </Emoji>
);

const PianoEmoji = () => (
  <Emoji label="Klaviertasten">
    <rect x="11" y="12" width="183" height="182" rx="5" fill="#1f1f20" />
    <path d="M15 40H57V189H15ZM60 40H101V189H60ZM104 40H145V189H104ZM148 40H190V189H148Z" fill="url(#ivory)" />
    <path d="M42 30H66V131H42ZM89 30H114V131H89ZM137 30H161V131H137Z" fill="#1b1b1c" />
    <path d="M45 122H63M92 122H111M140 122H158" stroke="#4c4c4e" strokeWidth="3" />
    <path d="M13 28H192" stroke="#3e3e40" strokeWidth="3" />
  </Emoji>
);

const MicEmoji = () => (
  <Emoji label="Mikrofon">
    <path d="M92 72L142 118L30 202Q14 206 4 192Q0 186 6 178Z" fill="url(#metal)" />
    <path d="M8 176L30 198" stroke="#1e1c1c" strokeWidth="5" />
    <path d="M104 78L126 90L112 112L90 100Z" fill="#d6d6d6" />
    <path d="M90 100L112 112L102 124L80 108Z" fill="#262424" />
    <circle cx="156" cy="48" r="45" fill="#8f8f8f" />
    <path d="M122 22L180 84M134 12L192 74M150 4L200 56M120 60L184 14M128 78L196 30M146 88L200 50" stroke="#5e5e5e" strokeWidth="3" />
    <path d="M110 50Q130 90 166 100L152 116Q112 104 98 68Z" fill="#b9b9b9" />
    <path d="M104 60Q124 96 158 108" fill="none" stroke="#ececec" strokeWidth="4" />
  </Emoji>
);

const flakes = [[19, 18], [161, 21], [186, 43], [34, 62], [160, 67], [178, 126], [15, 140]];

const SnowmanEmoji = () => (
  <Emoji label="Schneemann">
    <path d="M54 126Q34 104 8 88M30 102L14 74M26 98L2 100M148 116L178 96L192 80M170 100L194 92" fill="none" stroke="#6b4430" strokeWidth="7" strokeLinecap="round" />
    <rect x="33" y="109" width="135" height="94" rx="46" fill="url(#snow)" />
    <ellipse cx="101" cy="76" rx="44" ry="41" fill="url(#snow)" />
    <path d="M68 10Q98 0 126 10L122 34Q146 36 146 40Q100 54 54 42Q54 36 72 34Z" fill="#222021" />
    <path d="M72 26Q98 34 123 26V33Q98 41 71 33Z" fill="#7c2f2b" />
    <circle cx="81" cy="57" r="10" fill="#161616" />
    <circle cx="119" cy="57" r="10" fill="#161616" />
    <path d="M95 60Q101 54 107 60L102 80Q98 82 95 60Z" fill="#d9742c" />
    <path d="M78 84Q101 102 124 84" fill="none" stroke="#1a1a1a" strokeWidth="7" strokeDasharray="1 10" strokeLinecap="round" />
    <circle cx="101" cy="134" r="12" fill="#171717" />
    <circle cx="101" cy="166" r="12" fill="#171717" />
    {flakes.map(([x, y]) => (
      <g key={`${x}-${y}`} transform={`translate(${x} ${y})`}>
        <circle r="14" fill="#a9d9ec" />
        <path d="M0-12V12M-10-6L10 6M-10 6L10-6" stroke="#4b8fae" strokeWidth="3" />
      </g>
    ))}
  </Emoji>
);

/* ---------- chat ---------- */

function Ticks({ read }) {
  return (
    <TicksSvg $read={read} viewBox="0 0 62 44" role="img" aria-label={read ? 'Gelesen' : 'Zugestellt'}>
      <path d="M4 27L14 37L41 3M28 33L32 37L59 3" />
    </TicksSvg>
  );
}

function Message({ mine, layout, wide, tabular, time, status, children }) {
  return (
    <Bubble $mine={mine} $layout={layout}>
      <TailSvg $mine={mine} viewBox="0 0 40 50" aria-hidden="true">
        <path d="M22 0C22 25 30 40 40 49L40 50C28 50 18 47 11 41L0 28V0Z" />
      </TailSvg>
      <Text $layout={layout} $wide={wide} $tabular={tabular}>{children}</Text>
      <Meta>
        <Time dateTime={time}>{time}</Time>
        {status && <Ticks read={status === 'read'} />}
      </Meta>
    </Bubble>
  );
}

function App() {
  return (
    <Screen>
      <GlobalStyle />
      <Defs />
      <Wallpaper />
      <MessageList>
        <Message mine wide layout="tucked" time="13:11" status="read">
          Hey Nils, könntest du einen Flyer<br />
          für das Winterkonzert erstellen?<br />
          <TreeEmoji />
        </Message>
        <Message layout="below" time="13:28">
          Klar! Wann war das nochmal? <MonocleEmoji />
        </Message>
        <Message mine layout="beside" time="13:52" status="read">
          Am <TextLink href="#termin">Mi., 17.12.2025</TextLink> <SantaEmoji />
        </Message>
        <Message layout="below" time="13:54">
          Okidoki, ab wann geht's wo los?
        </Message>
        <Message mine wide tabular layout="below" time="16:00" status="read">
          <TextLink href="#uhrzeit">19 Uhr</TextLink> im unteren Forum der<br />
          CvO GyO - <TextLink href="#adresse">Schiffdorfer<br />
          Chaussee 97</TextLink>, Bhv. <StaffEmoji /><NotesEmoji />
        </Message>
        <Message layout="beside" time="16:16">
          Ist gemacht... <GrinEmoji /><VictoryEmoji /><SparklesEmoji />
        </Message>
        <Message mine layout="beside" time="16:17" status="sent">
          Supi <PianoEmoji /><MicEmoji /><SnowmanEmoji />
        </Message>
      </MessageList>
    </Screen>
  );
}

export default App;
